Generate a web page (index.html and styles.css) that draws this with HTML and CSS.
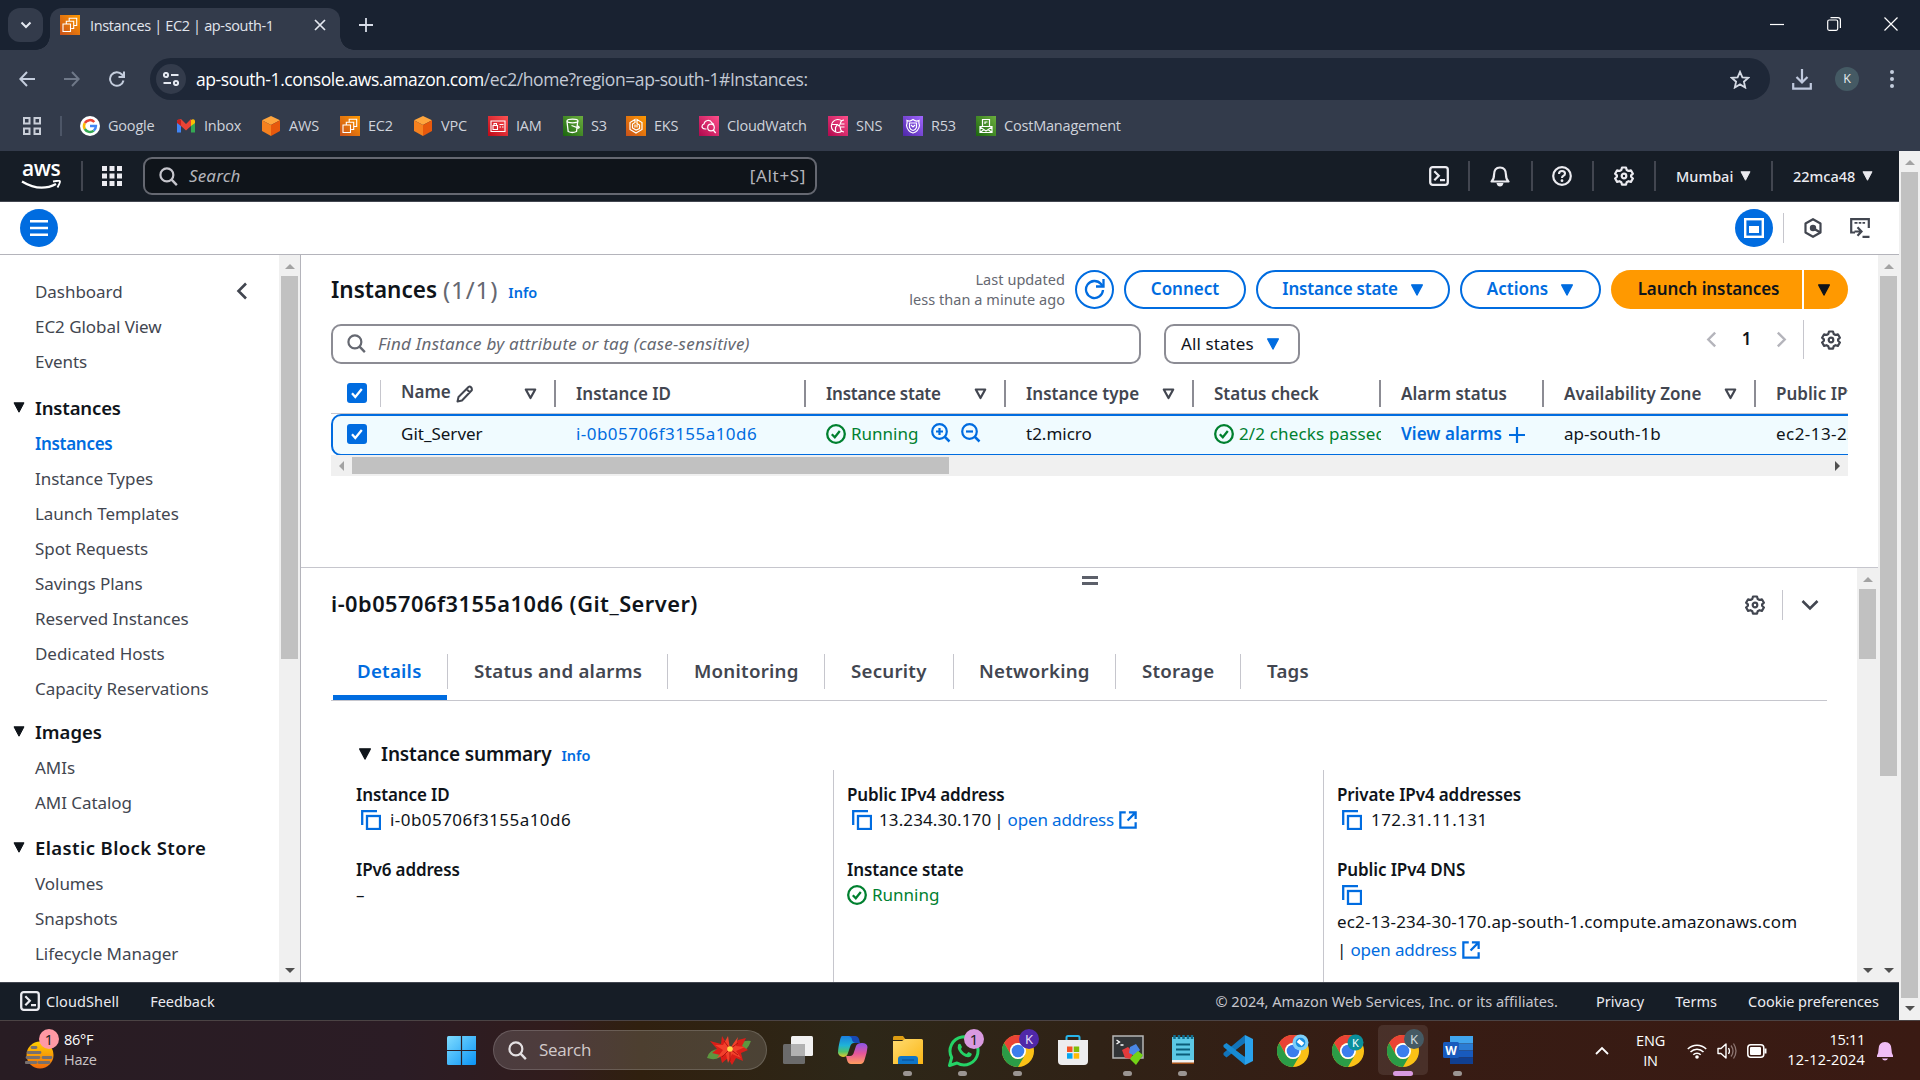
FILE: index.html
```html
<!DOCTYPE html>
<html lang="en">
<head>
<meta charset="utf-8">
<title>Instances | EC2 | ap-south-1</title>
<link rel="stylesheet" href="styles.css">
</head>
<body>
<svg class="defs" aria-hidden="true">
  <defs>
    <linearGradient id="g-orange" x1="0" y1="1" x2="1" y2="0"><stop offset="0" stop-color="#c8511b"/><stop offset="1" stop-color="#ff9900"/></linearGradient>
    <linearGradient id="g-red" x1="0" y1="1" x2="1" y2="0"><stop offset="0" stop-color="#bd0816"/><stop offset="1" stop-color="#ff5252"/></linearGradient>
    <linearGradient id="g-green" x1="0" y1="1" x2="1" y2="0"><stop offset="0" stop-color="#1b660f"/><stop offset="1" stop-color="#6cae3e"/></linearGradient>
    <linearGradient id="g-pink" x1="0" y1="1" x2="1" y2="0"><stop offset="0" stop-color="#b0084d"/><stop offset="1" stop-color="#ff4f8b"/></linearGradient>
    <linearGradient id="g-purple" x1="0" y1="1" x2="1" y2="0"><stop offset="0" stop-color="#4d27a8"/><stop offset="1" stop-color="#a166ff"/></linearGradient>
    <linearGradient id="g-win" x1="0" y1="0" x2="1" y2="1"><stop offset="0" stop-color="#7fdcff"/><stop offset="1" stop-color="#0a93f5"/></linearGradient>
    <linearGradient id="g-sun" x1="0" y1="0" x2="0" y2="1"><stop offset="0" stop-color="#ffd000"/><stop offset="1" stop-color="#f26a0b"/></linearGradient>
    <linearGradient id="g-folder" x1="0" y1="0" x2="1" y2="1"><stop offset="0" stop-color="#ffdb70"/><stop offset="1" stop-color="#fbb615"/></linearGradient>
    <linearGradient id="g-cop1" x1="0" y1="0" x2="0" y2="1"><stop offset="0" stop-color="#1a7fe0"/><stop offset=".45" stop-color="#1fb3d8"/><stop offset=".75" stop-color="#4fc26b"/><stop offset="1" stop-color="#e8c92b"/></linearGradient>
    <linearGradient id="g-cop2" x1="0" y1="0" x2="0" y2="1"><stop offset="0" stop-color="#8a55ea"/><stop offset=".5" stop-color="#e5569a"/><stop offset="1" stop-color="#ff9e5e"/></linearGradient>
    <symbol id="gear" viewBox="0 0 20 20"><path d="M8 1.500h4l.7 2.500 1.800 1 2.400-.7 2 3.400-1.800 1.700v1.400l1.800 1.700-2 3.400-2.400-.7-1.800 1-.7 2.400H8l-.7-2.400-1.800-1-2.400.7-2-3.400 1.800-1.700V9.400L1.100 7.700l2-3.400 2.400.7 1.800-1z" fill="none" stroke="currentColor" stroke-width="2.200" stroke-linejoin="round"/><circle cx="10" cy="10" r="2.300" fill="none" stroke="currentColor" stroke-width="2.200"/></symbol>
    <symbol id="tri" viewBox="0 0 12 11"><path d="M1 .8h10L6 10.200z" fill="currentColor" stroke="currentColor" stroke-linejoin="round"/></symbol>
    <symbol id="filter" viewBox="0 0 13 12"><path d="M1.800 1.500h9.400L6.500 10z" fill="none" stroke="currentColor" stroke-width="2.200" stroke-linejoin="round"/></symbol>
    <symbol id="search" viewBox="0 0 20 20"><circle cx="8.300" cy="8.300" r="6.800" fill="none" stroke="currentColor" stroke-width="2.300"/><path d="M13 13l5.800 6" fill="none" stroke="currentColor" stroke-width="2.500"/></symbol>
    <symbol id="shell" viewBox="0 0 20 20"><rect x="1.200" y="1.200" width="17.600" height="17.600" rx="2.500" fill="none" stroke="currentColor" stroke-width="2.300"/><path d="M5.300 5.300l4.500 4.500-4.500 4.500M11 14.200h5" fill="none" stroke="currentColor" stroke-width="2.200"/></symbol>
    <symbol id="ok" viewBox="0 0 20 20"><circle cx="10" cy="10" r="8.800" fill="none" stroke="#00802f" stroke-width="2.300"/><path d="M5.800 10.200l3 3 5-6.200" fill="none" stroke="#00802f" stroke-width="2.300"/></symbol>
    <symbol id="copy" viewBox="0 0 20 20"><path d="M1.200 15V1.200H16" fill="none" stroke="currentColor" stroke-width="2.300"/><rect x="6" y="6" width="13" height="13" fill="none" stroke="currentColor" stroke-width="2.300"/></symbol>
    <symbol id="ext" viewBox="0 0 20 20"><path d="M7.500 1.500h-6v17h17v-6M11 1.500h7.500V9M18.200 1.800L9.500 10.500" fill="none" stroke="currentColor" stroke-width="2.500"/></symbol>
    <symbol id="check" viewBox="0 0 20 20"><rect width="20" height="20" rx="3" fill="#006ce0"/><path d="M5 10.300l3.300 3.700 6.500-8" fill="none" stroke="#fff" stroke-width="2.300"/></symbol>
    <symbol id="chev" viewBox="0 0 12 18"><path d="M10 1.500L2.500 9l7.500 7.500" fill="none" stroke="currentColor" stroke-width="2.600"/></symbol>
    <symbol id="cube" viewBox="0 0 18 20"><path d="M9 0l9 4.300L9 9 0 4.300z" fill="#ffa53d"/><path d="M0 4.300L9 9v11l-9-5z" fill="#f6811f"/><path d="M18 4.300L9 9v11l9-5z" fill="#e8590c"/></symbol>
    <symbol id="ec2" viewBox="0 0 20 20"><rect width="20" height="20" fill="url(#g-orange)"/><path d="M3 9h7.500v7.500H3zM6.300 8.500V6.200h7.400v7.300h-2.500M9.200 6V3.300h7.500v7.200H14" fill="none" stroke="#fff" stroke-width="1.100"/></symbol>
    <symbol id="chrome" viewBox="0 0 32 32"><circle cx="16" cy="16" r="16" fill="#fbc116"/><path d="M2.140 8A16 16 0 0 1 29.860 8H16a8 8 0 0 0-6.930 12z" fill="#ea4335"/><path d="M2.140 8l6.930 12A8 8 0 0 0 22.930 20L16 32A16 16 0 0 1 2.140 8z" fill="#2b9c47"/><circle cx="16" cy="16" r="8" fill="#fff"/><circle cx="16" cy="16" r="6.300" fill="#3b7ded"/></symbol>
  </defs>
</svg>

<header class="browser">
  <div class="tabstrip">
    <button class="tabmenu"><svg width="12" height="8" viewBox="0 0 12 8"><path d="M1.500 1.500L6 6l4.500-4.500" fill="none" stroke="#e4e8f0" stroke-width="2"/></svg></button>
    <div class="tab">
      <svg width="20" height="20"><use href="#ec2"/></svg>
      <span class="tabtitle">Instances | EC2 | ap-south-1</span>
      <svg width="12" height="12" viewBox="0 0 12 12"><path d="M1 1l10 10M11 1L1 11" stroke="#e4e8f0" stroke-width="1.700"/></svg>
    </div>
    <svg class="plus" width="14" height="14" viewBox="0 0 14 14"><path d="M7 0v14M0 7h14" stroke="#d8dde8" stroke-width="1.800"/></svg>
    <div class="winbtns">
      <svg width="14" height="14" viewBox="0 0 14 14"><path d="M0 7.500h14" stroke="#fff" stroke-width="1.200"/></svg>
      <svg width="14" height="14" viewBox="0 0 14 14"><rect x=".7" y="3" width="10" height="10.300" rx="1.500" fill="none" stroke="#fff" stroke-width="1.200"/><path d="M3.500 .7h7.500q2.400 0 2.400 2.400v8" fill="none" stroke="#fff" stroke-width="1.200"/></svg>
      <svg width="14" height="14" viewBox="0 0 14 14"><path d="M.5 .5l13 13M13.500 .5l-13 13" stroke="#fff" stroke-width="1.200"/></svg>
    </div>
  </div>
  <div class="toolbar">
    <svg width="16" height="16" viewBox="0 0 16 16"><path d="M16 8H1.500M8 1L1.300 8 8 15" fill="none" stroke="#c4cddd" stroke-width="2"/></svg>
    <svg width="16" height="16" viewBox="0 0 16 16"><path d="M0 8h14.500M8 1l6.700 7L8 15" fill="none" stroke="#6f7888" stroke-width="2"/></svg>
    <svg width="16" height="16" viewBox="0 0 16 16"><path d="M14.500 9.500A6.800 6.800 0 1 1 13 3.500l1.500 1.800M15 .5v5.500H9.500" fill="none" stroke="#c4cddd" stroke-width="2"/></svg>
    <div class="omnibox">
      <span class="tune"><svg width="16" height="14" viewBox="0 0 16 14"><g fill="none" stroke="#e4e8f0" stroke-width="2"><circle cx="3" cy="3" r="2.100"/><path d="M8 3h7.500M.5 11H8"/><circle cx="13" cy="11" r="2.100"/></g></svg></span>
      <span class="url"><b>ap-south-1.console.aws.amazon.com</b>/ec2/home?region=ap-south-1#Instances:</span>
      <svg width="20" height="19" viewBox="0 0 20 19"><path d="M10 1.800l2.400 5.500 6 .5-4.500 3.900 1.300 5.800L10 14.400l-5.200 3.100 1.300-5.800L1.600 7.800l6-.5z" fill="none" stroke="#d5dae4" stroke-width="1.800"/></svg>
    </div>
    <svg class="dl" width="20" height="21" viewBox="0 0 20 21"><path d="M10 0v13M4.500 8l5.500 5.500L15.500 8M1.200 14v5.600h17.600V14" fill="none" stroke="#c0c9dd" stroke-width="2.200"/></svg>
    <span class="avatar">K</span>
    <svg class="dots" width="4" height="18" viewBox="0 0 4 18" fill="#c4cddd"><circle cx="2" cy="2" r="2"/><circle cx="2" cy="9" r="2"/><circle cx="2" cy="16" r="2"/></svg>
  </div>
  <nav class="bookmarks">
    <svg class="apps" width="18" height="18" viewBox="0 0 18 18"><g fill="none" stroke="#c9ced8" stroke-width="2"><path d="M1 1h5.500v5.500H1zM11.500 1H17v5.500h-5.500zM1 11.500h5.500V17H1zM11.500 11.500H17V17h-5.500z"/></g></svg>
    <div class="bmlist">
      <a><svg width="20" height="20" viewBox="0 0 20 20"><circle cx="10" cy="10" r="10" fill="#fff"/><g fill="none" stroke-width="2.500"><path d="M14.300 6A6 6 0 0 0 4.800 7" stroke="#ea4335"/><path d="M4.800 7a6 6 0 0 0 0 6" stroke="#fbbc05"/><path d="M4.800 13a6 6 0 0 0 9 1.600" stroke="#34a853"/><path d="M13.800 14.600A6 6 0 0 0 15.900 10H10" stroke="#4285f4"/></g></svg><span>Google</span></a>
      <a><svg width="20" height="20" viewBox="0 0 20 20"><path d="M1 4v12.500h4V9z" fill="#4285f4"/><path d="M19 4v12.500h-4V9z" fill="#34a853"/><path d="M1 4.500L5 3l5 5 5-5v7l-5 4.500L5 10z" fill="#ea4335"/><path d="M1 4.500Q2.500 2.500 5 4v6L1 7z" fill="#c5221f"/><path d="M19 4.500Q17.500 2.500 15 4v6l4-3z" fill="#fbbc04"/></svg><span>Inbox</span></a>
      <a><svg width="20" height="20"><use href="#cube"/></svg><span>AWS</span></a>
      <a><svg width="20" height="20"><use href="#ec2"/></svg><span>EC2</span></a>
      <a><svg width="20" height="20"><use href="#cube"/></svg><span>VPC</span></a>
      <a><svg width="20" height="20" viewBox="0 0 20 20"><rect width="20" height="20" fill="url(#g-red)"/><g fill="none" stroke="#fff" stroke-width="1.100"><path d="M3 5h14v10.500H3zM5 9.500h4.500v4H5zM6 9.300V7.500h2.500v1.800M11.500 8.500h4M11.500 11h1.500M14 11h1.500"/></g></svg><span>IAM</span></a>
      <a><svg width="20" height="20" viewBox="0 0 20 20"><rect width="20" height="20" fill="url(#g-green)"/><g fill="none" stroke="#fff" stroke-width="1.300"><ellipse cx="9.500" cy="5" rx="5.500" ry="1.800"/><path d="M4 5.500l1.200 10q4 2 8.300 0l1.200-10M8.500 9.500l7 2.500q2-.5-1.500-2.500"/></g></svg><span>S3</span></a>
      <a><svg width="20" height="20" viewBox="0 0 20 20"><rect width="20" height="20" fill="url(#g-orange)"/><g fill="none" stroke="#fff" stroke-width="1.200"><path d="M9 3.500L4 6.500v7l6 3.500 6-3.500v-7l-5-3v4l2.500 1.500v3.500L10 14l-3.500-2V8L9 6.500zM9 8.500v3M11 8.500v3"/></g></svg><span>EKS</span></a>
      <a><svg width="20" height="20" viewBox="0 0 20 20"><rect width="20" height="20" fill="url(#g-pink)"/><g fill="none" stroke="#fff" stroke-width="1.200"><path d="M7.500 13H6q-3-.5-3-2.500t2-2.500q.5-3 3.500-3.500T13 7l2 1.500"/><circle cx="12" cy="11.500" r="3.300"/><path d="M14.200 14l2.500 3"/></g></svg><span>CloudWatch</span></a>
      <a><svg width="20" height="20" viewBox="0 0 20 20"><rect width="20" height="20" fill="url(#g-pink)"/><g fill="none" stroke="#fff" stroke-width="1.200"><path d="M14 5A6.500 6.500 0 1 0 14 15M3.500 8.500h6l-2 3v4M16 4q-3 0-3.500 3T10 9.500q2.500 0 2.500 3T16 16M13 8h3.500M13 11h3.500"/></g></svg><span>SNS</span></a>
      <a><svg width="20" height="20" viewBox="0 0 20 20"><rect width="20" height="20" fill="url(#g-purple)"/><g fill="none" stroke="#fff" stroke-width="1.200"><path d="M4 4.500q3 1.500 6-1 3 2.500 6 1-.5 3 .5 5-1 6-6.500 7.500Q4.500 15.500 3.500 9.500q1-2 .5-5z"/><path d="M6.500 7h7v4.500q-1 2.500-3.500 3-2.500-.5-3.500-3zM8 9l2 2 2-2"/></g></svg><span>R53</span></a>
      <a><svg width="20" height="20" viewBox="0 0 20 20"><rect width="20" height="20" fill="url(#g-green)"/><g fill="none" stroke="#fff" stroke-width="1.200"><path d="M6.500 10V3.500h7V10M4 10.500h12v6H4zM4 11l6 4 6-4M4 16.500l4-3M16 16.500l-4-3M9 8V6h2.500"/></g></svg><span>CostManagement</span></a>
    </div>
  </nav>
</header>

<div class="viewport">
  <div class="page">
    <header class="awsnav">
      <div class="logo"><span>aws</span><svg width="40" height="12" viewBox="0 0 40 12"><path d="M1 1.500q18 11 34 2.500" fill="none" stroke="#fff" stroke-width="2.200"/><path d="M32 1.500q7-1.500 7 0t-2.500 6" fill="none" stroke="#fff" stroke-width="1.800"/></svg></div>
      <div class="services"><svg width="20" height="20" viewBox="0 0 20 20" fill="#ebebf0"><path d="M0 0h5v5H0zM7.500 0h5v5h-5zM15 0h5v5h-5zM0 7.500h5v5H0zM7.500 7.500h5v5h-5zM15 7.500h5v5h-5zM0 15h5v5H0zM7.500 15h5v5h-5zM15 15h5v5h-5z"/></svg></div>
      <div class="awssearch"><svg width="19" height="19"><use href="#search"/></svg><i>Search</i><span>[Alt+S]</span></div>
      <div class="awsright">
        <span><svg width="20" height="20"><use href="#shell"/></svg></span>
        <span><svg width="20" height="21" viewBox="0 0 20 21"><path d="M1.500 15.500q2.500-2 2.500-6.500 0-7.500 6-7.500T16 9q0 4.500 2.500 6.500z" fill="none" stroke="currentColor" stroke-width="2.200" stroke-linejoin="round"/><path d="M6.500 17h7q-.8 3.500-3.500 3.500T6.500 17z" fill="currentColor"/></svg></span>
        <span><svg width="20" height="20" viewBox="0 0 20 20"><circle cx="10" cy="10" r="8.800" fill="none" stroke="currentColor" stroke-width="2.200"/><path d="M7 8q0-3 3-3t3 2.600q0 1.600-1.500 2.200T10 12" fill="none" stroke="currentColor" stroke-width="2.100"/><circle cx="10" cy="14.700" r="1.400" fill="currentColor"/></svg></span>
        <span><svg width="20" height="20"><use href="#gear"/></svg></span>
        <span class="txt">Mumbai<svg width="11" height="10"><use href="#tri"/></svg></span>
        <span class="txt">22mca48<svg width="11" height="10"><use href="#tri"/></svg></span>
      </div>
    </header>

    <div class="crumbs">
      <span class="disc"><svg width="18" height="16" viewBox="0 0 18 16"><path d="M0 1.300h18M0 8h18M0 14.700h18" stroke="#fff" stroke-width="2.400"/></svg></span>
      <span class="disc push"><svg width="20" height="20" viewBox="0 0 20 20"><rect x="1.200" y="1.200" width="17.600" height="17.600" fill="none" stroke="#fff" stroke-width="2.400"/><rect x="5" y="8" width="10" height="7" fill="#fff"/></svg></span>
      <span class="vline"></span>
      <svg class="hex" width="20" height="20" viewBox="0 0 20 20"><path d="M10 1.200l7.500 4.300v9L10 18.800l-7.500-4.300v-9z" fill="none" stroke="#424650" stroke-width="2.200" stroke-linejoin="round"/><circle cx="10" cy="10" r="3.200" fill="#424650"/><path d="M10.500 10.500l6.500 3.700" stroke="#424650" stroke-width="2.400"/></svg>
      <svg width="20" height="20" viewBox="0 0 20 20"><path d="M5 14.500H1.200V1.200h17.600V10M12.500 18.800h7" fill="none" stroke="#424650" stroke-width="2.200"/><path d="M4.500 4.800h3M8.700 4.800h2.600M12.500 4.800h2.600" stroke="#424650" stroke-width="1.800"/><path d="M4.500 13.500h6.500M7.500 9.300l4 4.200-4 4.300" fill="none" stroke="#424650" stroke-width="2.200"/></svg>
    </div>

    <div class="body">
      <aside class="sidebar">
        <nav class="side">
          <div class="toprow"><a>Dashboard</a><svg width="12" height="18"><use href="#chev"/></svg></div>
          <a>EC2 Global View</a>
          <a>Events</a>
          <h4 class="h-inst"><svg width="12" height="11"><use href="#tri"/></svg>Instances</h4>
          <a class="on">Instances</a>
          <a>Instance Types</a>
          <a>Launch Templates</a>
          <a>Spot Requests</a>
          <a>Savings Plans</a>
          <a>Reserved Instances</a>
          <a>Dedicated Hosts</a>
          <a>Capacity Reservations</a>
          <h4 class="h-img"><svg width="12" height="11"><use href="#tri"/></svg>Images</h4>
          <a>AMIs</a>
          <a>AMI Catalog</a>
          <h4 class="h-ebs"><svg width="12" height="11"><use href="#tri"/></svg>Elastic Block Store</h4>
          <a>Volumes</a>
          <a>Snapshots</a>
          <a>Lifecycle Manager</a>
        </nav>
        <div class="sb"><i class="up"></i><b class="t-side"></b><i class="down"></i></div>
      </aside>

      <main class="main">
        <section class="list">
          <div class="head">
            <h1>Instances</h1><span class="count">(1/1)</span><a class="info">Info</a>
            <p class="updated">Last updated<br>less than a minute ago</p>
            <button class="btn round"><svg width="21" height="21" viewBox="0 0 21 21"><path d="M19 11A8.500 8.500 0 1 1 17 5l2 2.500" fill="none" stroke="currentColor" stroke-width="2.300"/><path d="M19.500 0v7.500H12" fill="none" stroke="currentColor" stroke-width="2.300"/></svg></button>
            <button class="btn w-connect">Connect</button>
            <button class="btn w-state">Instance state<svg width="14" height="12"><use href="#tri"/></svg></button>
            <button class="btn w-actions">Actions<svg width="14" height="12"><use href="#tri"/></svg></button>
            <button class="launch">Launch instances</button>
            <button class="launchmore"><svg width="14" height="12"><use href="#tri"/></svg></button>
          </div>
          <div class="filters">
            <div class="find"><svg width="19" height="19"><use href="#search"/></svg><i>Find Instance by attribute or tag (case-sensitive)</i></div>
            <div class="states">All states<svg width="14" height="12"><use href="#tri"/></svg></div>
            <div class="pager"><svg class="dim" width="11" height="17"><use href="#chev"/></svg><span>1</span><svg class="dim flip" width="11" height="17"><use href="#chev"/></svg></div>
            <div class="prefs"><svg width="20" height="20"><use href="#gear"/></svg></div>
          </div>
          <div class="table">
            <div class="tr th">
              <div><svg width="20" height="20"><use href="#check"/></svg></div>
              <div><span class="nm">Name</span><svg class="pen" width="18" height="18" viewBox="0 0 18 18"><path d="M1.500 16.500l1-4.500L12.500 2q1.300-1 2.500.3t.8 3L6 15.500zM10.500 4l3.500 3.500" fill="none" stroke="currentColor" stroke-width="2" stroke-linejoin="round"/></svg><svg class="fl" width="13" height="12"><use href="#filter"/></svg></div>
              <div>Instance ID</div>
              <div class="tight">Instance state<svg class="fl" width="13" height="12"><use href="#filter"/></svg></div>
              <div>Instance type<svg class="fl" width="13" height="12"><use href="#filter"/></svg></div>
              <div>Status check</div>
              <div>Alarm status</div>
              <div>Availability Zone<svg class="fl" width="13" height="12"><use href="#filter"/></svg></div>
              <div>Public IPv4 DNS</div>
            </div>
            <div class="tr td">
              <div><svg width="20" height="20"><use href="#check"/></svg></div>
              <div>Git_Server</div>
              <div><a class="digits">i-0b05706f3155a10d6</a></div>
              <div class="green"><svg width="20" height="20"><use href="#ok"/></svg>Running
                <svg class="zi" width="20" height="20" viewBox="0 0 20 20"><path d="M8.500 5v7M5 8.500h7" stroke="#006ce0" stroke-width="2.200"/><circle cx="8.500" cy="8.500" r="7.300" fill="none" stroke="#006ce0" stroke-width="2.200"/><path d="M13.500 13.500l5 5" stroke="#006ce0" stroke-width="2.500"/></svg>
                <svg class="zo" width="20" height="20" viewBox="0 0 20 20"><path d="M5 8.500h7" stroke="#006ce0" stroke-width="2.200"/><circle cx="8.500" cy="8.500" r="7.300" fill="none" stroke="#006ce0" stroke-width="2.200"/><path d="M13.500 13.500l5 5" stroke="#006ce0" stroke-width="2.500"/></svg></div>
              <div>t2.micro</div>
              <div class="green checks"><svg width="20" height="20"><use href="#ok"/></svg><span>2/2 checks passed</span></div>
              <div><a class="bold">View alarms</a><svg class="add" width="16" height="16" viewBox="0 0 16 16"><path d="M8 0v16M0 8h16" stroke="#006ce0" stroke-width="2.200"/></svg></div>
              <div>ap-south-1b</div>
              <div class="digits">ec2-13-234-30-170</div>
            </div>
          </div>
          <div class="hsb"><i class="left"></i><b></b><i class="right"></i></div>
        </section>

        <section class="split">
          <div class="detail">
            <div class="grip"></div>
            <div class="dtitle"><h2>i-0b05706f3155a10d6 (Git_Server)</h2><svg width="20" height="20"><use href="#gear"/></svg><span class="vline"></span><svg class="dchev" width="18" height="12" viewBox="0 0 18 12"><path d="M1.500 2L9 9.500 16.500 2" fill="none" stroke="#424650" stroke-width="2.600"/></svg></div>
            <div class="tabs"><span class="on t1">Details</span><span class="t2">Status and alarms</span><span class="t3">Monitoring</span><span class="t4">Security</span><span class="t5">Networking</span><span class="t6">Storage</span><span class="t7">Tags</span></div>
            <div class="sumhead"><svg width="14" height="12"><use href="#tri"/></svg><h3>Instance summary</h3><a class="info">Info</a></div>
            <div class="cols">
              <dl><dt>Instance ID</dt><dd><svg class="cp" width="20" height="20"><use href="#copy"/></svg><span class="digits">i-0b05706f3155a10d6</span></dd><dt>IPv6 address</dt><dd>–</dd></dl>
              <dl><dt>Public IPv4 address</dt><dd><svg class="cp" width="20" height="20"><use href="#copy"/></svg><span class="ip">13.234.30.170</span><span class="bar">|</span><a>open address</a><svg class="ex" width="18" height="18"><use href="#ext"/></svg></dd><dt>Instance state</dt><dd class="green"><svg width="20" height="20"><use href="#ok"/></svg>Running</dd></dl>
              <dl><dt>Private IPv4 addresses</dt><dd><svg class="cp" width="20" height="20"><use href="#copy"/></svg><span class="digits">172.31.11.131</span></dd><dt>Public IPv4 DNS</dt><dd><svg class="cp" width="20" height="20"><use href="#copy"/></svg></dd><dd class="dns">ec2-13-234-30-170.ap-south-1.compute.amazonaws.com</dd><dd class="open"><span class="bar">|</span><a>open address</a><svg class="ex" width="18" height="18"><use href="#ext"/></svg></dd></dl>
            </div>
          </div>
          <div class="sb"><i class="up"></i><b class="t-split"></b><i class="down"></i></div>
        </section>
      </main>
      <div class="sb"><i class="up"></i><b class="t-main"></b><i class="down"></i></div>
    </div>

    <footer class="foot">
      <svg width="20" height="20"><use href="#shell"/></svg><span class="cs">CloudShell</span><span>Feedback</span>
      <span class="copyr">© 2024, Amazon Web Services, Inc. or its affiliates.</span><span class="pv">Privacy</span><span class="tm">Terms</span><span class="ck">Cookie preferences</span>
    </footer>
  </div>
  <div class="sb pagesb"><i class="up"></i><b class="t-page"></b><i class="down"></i></div>
</div>

<footer class="taskbar">
  <div class="weather">
    <svg width="36" height="44" viewBox="0 0 36 44"><circle cx="15" cy="26" r="13.500" fill="url(#g-sun)"/><path d="M7 18.500h4M3 23.500h12M18 28.500h8M2 28.500h12M1 33.500h10M14 33.500h10" stroke="#77706f" stroke-width="2.800" stroke-linecap="round"/><circle cx="24" cy="10" r="10" fill="#ff99a4"/><text x="24" y="15.500" text-anchor="middle" font-size="14.500" fill="#222">1</text></svg>
    <p>86°F<br><em>Haze</em></p>
  </div>
  <div class="apps-row">
    <span class="win"><svg width="29" height="29" viewBox="0 0 29 29" fill="url(#g-win)"><path d="M1.500 0H29v27.500q0 1.500-1.500 1.500h-26Q0 29 0 27.500v-26Q0 0 1.500 0z"/><path d="M14.500 0v29M0 14.500h29" stroke="#2b1e26" stroke-width="1.200"/></svg></span>
    <div class="tsearch"><svg width="19" height="19"><use href="#search"/></svg><span>Search</span>
      <svg width="44" height="30" viewBox="0 0 44 30"><path d="M0 23q2-9 13-9l6 3q-8 10-19 6zM44 6q-8-1-14 4l-2 6q11 4 16-10z" fill="#5d9640"/><path d="M23 14L15 1l-1 8-11-3 7 8-5 4 8 2 2 8 6-5 4 7 4-7 7 3-2-8 7-3-6-4 4-8-8 2z" fill="#d91e18"/><path d="M23 14L21 1l-5 9-8 0 8 5-6 8 9-4 2 9 4-9 9 4-5-7 9-4-9-1 2-9-5 7z" fill="#f2402b"/><path d="M23 14L17 6M23 14l8-6M23 14l-8 8M23 14l8 6M23 14v12" stroke="#a8120f" stroke-width=".9"/><circle cx="23" cy="14" r="2.800" fill="#ffd94a"/></svg></div>
    <span><svg width="32" height="32" viewBox="0 0 32 32"><rect x="1" y="10" width="22" height="20" rx="1.500" fill="#6b6b6b"/><rect x="9" y="2" width="22" height="20" rx="1.500" fill="#f1f1f1"/><path d="M9 10h14v12H9z" fill="#b2b2b2"/></svg></span>
    <span><svg width="32" height="32" viewBox="0 0 32 32"><path d="M5 2h11q3 0 4 3l1 4h-4q-3 0-4 4l-2 6q-1 4-5 4-4-.5-5-4 0-5 2-13 1-4 2-4z" fill="url(#g-cop1)"/><path d="M12 2h6q3 0 4 3l1 4h-4q-3 0-4-3 0-3-3-4z" fill="#1749b5"/><path d="M25 9q5 0 5.500 4-.5 6-3 13-1 4-4 4H14q-3 0-4-4l-1-4h4q3 0 4-4l2-6q1-3 6-3z" fill="url(#g-cop2)"/></svg></span>
    <span class="dot"><svg width="32" height="32" viewBox="0 0 32 32"><path d="M1 3.500Q1 2 2.500 2H11l3 4H1z" fill="#dd9d12"/><path d="M1 7h9l3-2h16.500Q31 5 31 6.500V30H1z" fill="url(#g-folder)"/><path d="M6 30v-5q0-3 3-3h14q3 0 3 3v5z" fill="#0f75c8"/><path d="M10 26h12" stroke="#0a4a90"/></svg></span>
    <span class="dot"><svg class="badged" width="38" height="40" viewBox="0 0 38 40"><path d="M3.500 36.500l2.200-8A14 14 0 1 1 11 34z" fill="none" stroke="#25d366" stroke-width="3" stroke-linejoin="round"/><path d="M12 16q1-2 2.500-1l1.500 3-1 2q2 4 5.500 5l2-2 3 1.500q1 1-1 3-3 2-8-1.500-6-5-4.500-10z" fill="#25d366"/><circle cx="28" cy="10" r="10" fill="#d99ae0"/><text x="28" y="15.500" text-anchor="middle" font-size="15" fill="#222">1</text></svg></span>
    <span class="dot"><svg class="badged" width="38" height="40" viewBox="0 0 38 40"><svg x="1" y="6" width="32" height="32"><use href="#chrome"/></svg><circle cx="28" cy="10" r="10" fill="#5028a8"/><text x="28" y="15" text-anchor="middle" font-size="13" fill="#e3d8f8">K</text></svg></span>
    <span><svg width="32" height="32" viewBox="0 0 32 32"><path d="M9.500 8V3.500Q9.500 2 11 2h10q1.500 0 1.500 1.500V8" fill="none" stroke="#28b5ea" stroke-width="2"/><path d="M1 6h30v21q0 4-4 4H5q-4 0-4-4z" fill="#ededee"/><path d="M10 12.500h5.500V18H10z" fill="#f35325"/><path d="M16.700 12.500h5.500V18h-5.500z" fill="#81bc06"/><path d="M10 19.200h5.500v5.500H10z" fill="#05a6f0"/><path d="M16.700 19.200h5.500v5.500h-5.500z" fill="#ffba08"/></svg></span>
    <span class="dot"><svg width="32" height="32" viewBox="0 0 32 32"><rect x="1" y="2" width="30" height="22" fill="#333537" stroke="#b7b7b7" stroke-width="1.500"/><path d="M4.500 6l3 2-3 2M8.500 11h3" stroke="#fff" stroke-width="1.300" fill="none"/><path d="M10 16l6-3 5 5-2 7-6-1z" fill="#e33b3b"/><path d="M18 13l6-3 4 6-5 6-6-3z" fill="#4a87e6"/><path d="M20 22l6-5 5 4-7 10-6-6z" fill="#73d216"/></svg></span>
    <span class="dot"><svg width="32" height="32" viewBox="0 0 32 32"><path d="M5 3h22v24H5z" fill="#5cc8e4"/><path d="M5 27h22v3H5z" fill="#a34f15"/><path d="M5 26h22v2.500H5z" fill="#f2f2f2"/><path d="M7.500 1v4M12 1v4M16.500 1v4M21 1v4M25 1v4" stroke="#116f91" stroke-width="2.500"/><path d="M9 10.500h14M9 15.500h14M9 20.500h14" stroke="#0b5c78" stroke-width="1.800"/></svg></span>
    <span><svg width="32" height="32" viewBox="0 0 32 32"><path d="M23 1l8 4v22l-8 4-1-6V9z" fill="#2aa2ec"/><path d="M23 1v8L4.500 23.500 1.500 21v-2z" fill="#1274ba"/><path d="M23 31v-8L4.500 9 1.500 11v2z" fill="#178bd4"/><path d="M23 9v14l-9-7z" fill="#33241a"/></svg></span>
    <span><svg width="34" height="36" viewBox="0 0 34 36"><svg x="1" y="3" width="32" height="32"><use href="#chrome"/></svg><circle cx="24.500" cy="10.500" r="8" fill="#7fd0f8"/><circle cx="24.500" cy="10.500" r="4.800" fill="#1a8fe0"/><path d="M22 8.500l5 4" stroke="#fff" stroke-width="4"/></svg></span>
    <span><svg width="34" height="36" viewBox="0 0 34 36"><svg x="1" y="3" width="32" height="32"><use href="#chrome"/></svg><circle cx="24.500" cy="10.500" r="8" fill="#0a8f9c"/><text x="24.500" y="14.500" text-anchor="middle" font-size="11" fill="#fff">K</text></svg></span>
    <span class="active"><svg class="badged" width="38" height="40" viewBox="0 0 38 40"><svg x="1" y="6" width="32" height="32"><use href="#chrome"/></svg><circle cx="28" cy="10" r="10" fill="#455a64"/><text x="28" y="15" text-anchor="middle" font-size="13" fill="#cfd8dc">K</text></svg></span>
    <span class="dot"><svg width="32" height="32" viewBox="0 0 32 32"><path d="M8 2h23v7.500H8z" fill="#41a5ee"/><path d="M8 9.500h23v7H8z" fill="#2b7cd3"/><path d="M8 16.500h23v7H8z" fill="#185abd"/><path d="M8 23.500h23V30H8z" fill="#103f91"/><rect x="1" y="8" width="16" height="16" rx="1.500" fill="#185abd"/><text x="9" y="20.500" text-anchor="middle" font-size="12" font-weight="700" fill="#fff">W</text></svg></span>
  </div>
  <div class="tray">
    <svg class="trayup" width="14" height="9" viewBox="0 0 14 9"><path d="M1 8l6-6 6 6" fill="none" stroke="#fff" stroke-width="1.800"/></svg>
    <p class="lang">ENG<br>IN</p>
    <svg width="20" height="16" viewBox="0 0 20 16"><g fill="none" stroke="#fff" stroke-width="1.500"><path d="M.8 6a13 13 0 0 1 18.400 0M3.500 9a9 9 0 0 1 13 0M6.300 11.800a5 5 0 0 1 7.400 0"/></g><circle cx="10" cy="14" r="1.800" fill="#fff"/></svg>
    <svg class="vol" width="20" height="18" viewBox="0 0 20 18"><path d="M1 6.500h3L9 2v14l-5-4.500H1z" fill="none" stroke="#fff" stroke-width="1.400" stroke-linejoin="round"/><path d="M11.500 6q2 3 0 6" fill="none" stroke="#fff" stroke-width="1.300"/><path d="M14 3.500q4 5.500 0 11M16.500 1.500q5 7.500 0 15" fill="none" stroke="#8d7672" stroke-width="1.300"/></svg>
    <svg class="bat" width="20" height="14" viewBox="0 0 20 14"><rect x=".8" y=".8" width="16" height="12.400" rx="3" fill="none" stroke="#fff" stroke-width="1.500"/><rect x="3" y="3" width="11" height="8" rx="1" fill="#fff"/><path d="M18.500 4.500v5" stroke="#fff" stroke-width="2"/></svg>
    <p class="clock">15:11<br><span>12-12-2024</span></p>
    <svg class="tbell" width="18" height="20" viewBox="0 0 18 20" fill="#f0bdf5"><path d="M1 14.500q1.500-2 1.500-6Q2.500 1 9 1t6.500 7.500q0 4 1.500 6v1.500H1zM6 17.500h6q-.8 2-3 2t-3-2z"/></svg>
  </div>
</footer>
</body>
</html>
```
FILE: styles.css
```css
* { box-sizing: border-box; }
body { margin: 0; width: 1920px; height: 1080px; overflow: hidden; display: flex; flex-direction: column; background: #fff; color: #0f141a; font: 17px/20px "Noto Sans", sans-serif; }
.defs { position: absolute; width: 0; height: 0; }
svg { display: block; flex: none; }
p, h1, h2, h3, h4, dl, dd { margin: 0; }
button { border: 0; background: none; padding: 0; font: inherit; color: inherit; display: flex; align-items: center; justify-content: center; flex: none; }
a { color: #006ce0; white-space: nowrap; }
text { font-family: "Noto Sans", sans-serif; }
.digits { letter-spacing: .45px; }

/* browser chrome */
.browser { flex: none; height: 151px; background: #333b4b; font-family: "Open Sans", "Noto Sans", sans-serif; }
.tabstrip { height: 50px; background: #192231; display: flex; align-items: flex-start; padding: 8px 22px 0 8px; }
.tabmenu { width: 35px; height: 34px; border-radius: 12px; background: #333b4b; margin-right: 7px; }
.tab { position: relative; width: 290px; height: 42px; border-radius: 12px 12px 0 0; background: #333b4b; display: flex; align-items: center; padding: 0 14px 8px 10px; color: #e1e5ed; }
.tab::before, .tab::after { content: ""; position: absolute; bottom: 0; width: 14px; height: 14px; }
.tab::before { left: -14px; background: radial-gradient(circle at 0 0, transparent 13.500px, #333b4b 14px); }
.tab::after { right: -14px; background: radial-gradient(circle at 100% 0, transparent 13.500px, #333b4b 14px); }
.tabtitle { flex: 1; margin: 1px 0 0 10px; font-size: 14.500px; letter-spacing: -.35px; white-space: nowrap; }
.plus { margin: 10px 0 0 19px; }
.winbtns { margin: 9px 0 0 auto; display: flex; gap: 43px; }
.toolbar { height: 58px; display: flex; align-items: center; padding-left: 19px; gap: 29px; border-radius: 12px 12px 0 0; }
.omnibox { width: 1620px; height: 42px; border-radius: 21px; background: #1e2737; display: flex; align-items: center; padding: 0 20px 0 6px; margin-left: -4px; }
.tune { width: 30px; height: 30px; border-radius: 50%; background: #333b4b; display: flex; align-items: center; justify-content: center; }
.url { flex: 1; margin-left: 10px; font-size: 17.500px; letter-spacing: -.41px; color: #c3c9d4; }
.url b { font-weight: 400; color: #fff; }
.dl { margin-left: -7px; }
.avatar { width: 24px; height: 24px; margin-left: -6px; border-radius: 50%; background: #455a64; color: #e6ecee; font-size: 12.500px; line-height: 24px; text-align: center; }
.dots { margin-left: 2px; }
.bookmarks { height: 36px; display: flex; align-items: center; padding-left: 23px; }
.bmlist { border-left: 2px solid #4d5667; margin-left: 19px; padding-left: 18px; height: 20px; display: grid; grid-template-columns: 96px 85px 79px 73px 75px 75px 63px 73px 129px 75px 73px 160px; }
.bmlist a { display: flex; align-items: center; gap: 8px; color: #cfd3db; font-size: 14.500px; letter-spacing: -.2px; }

/* console */
.viewport { flex: none; height: 869px; display: flex; }
.page { width: 1899px; display: flex; flex-direction: column; }
.awsnav { height: 51px; background: #161d26; border-bottom: 1px solid #424650; display: flex; align-items: center; padding-left: 21px; color: #ebebf0; }
.logo { width: 62px; height: 30px; border-right: 2px solid #424650; display: flex; flex-direction: column; }
.logo span { color: #fff; font: 600 21px/15px "Open Sans", sans-serif; letter-spacing: -.4px; padding-left: 1px; margin-bottom: 4px; }
.services { margin: 0 21px 0 19px; }
.awssearch { width: 674px; height: 38px; border: 2px solid #656871; border-radius: 9px; background: #0f141a; display: flex; align-items: center; padding: 0 9px 0 14px; color: #b4b4bb; }
.awssearch i { flex: 1; margin-left: 11px; letter-spacing: .15px; }
.awssearch span { letter-spacing: .65px; }
.awssearch svg { color: #c6c6cd; }
.awsright { margin-left: auto; display: grid; grid-template-columns: 60px 63px 61px 62px 117px 127px; }
.awsright span { height: 30px; display: flex; align-items: center; justify-content: center; padding-right: 2px; margin-left: -1px; }
.awsright span:first-child { padding: 0; margin: 0; }
.awsright span + span { border-left: 2px solid #424650; }
.awsright .txt { gap: 7px; font-size: 14.500px; font-weight: 500; white-space: nowrap; justify-content: flex-start; padding-left: 20px; }
.crumbs { height: 53px; border-bottom: 1px solid #b4b4bb; display: flex; align-items: center; padding: 0 29px 0 20px; }
.disc { width: 38px; height: 38px; border-radius: 50%; background: #006ce0; display: flex; align-items: center; justify-content: center; }
.push { margin-left: auto; }
.vline { width: 1px; height: 30px; background: #c6c6cd; flex: none; }
.crumbs .vline { margin: 0 19px 0 10px; }
.hex { margin-right: 27px; }
.body { height: 727px; display: flex; }
.sidebar { width: 301px; border-right: 1px solid #b4b4bb; display: flex; }
.side { flex: 1; padding: 18.500px 0 0 35px; overflow: hidden; color: #424650; }
.side a { display: block; height: 35px; line-height: 35px; color: inherit; letter-spacing: -.05px; }
.side .on { color: #006ce0; font-weight: 600; letter-spacing: -.3px; }
.toprow { display: flex; align-items: center; justify-content: space-between; padding-right: 31px; }
.side h4 { display: flex; align-items: center; gap: 10px; margin-left: -22px; font-size: 18.500px; font-weight: 600; color: #0f141a; }
.h-inst { height: 47px; padding-top: 11px; letter-spacing: -.15px; }
.h-img { height: 44.500px; padding-top: 8px; }
.h-ebs { height: 45.700px; padding-top: 10px; letter-spacing: .4px; }

/* scrollbars */
.sb { width: 21px; flex: none; background: #f0f0f0; display: flex; flex-direction: column; align-items: center; }
.sb i { width: 0; height: 0; border: 5px solid transparent; flex: none; }
.sb .up { border-top: 0; border-bottom-color: #a3a3a3; margin: 9px 0 7px; }
.sb .down { border-bottom: 0; border-top-color: #505050; margin: auto 0 9px; }
.sb b { width: 17px; background: #c1c1c1; }
.t-side { height: 383px; }
.t-main { height: 500px; }
.t-split { height: 70px; }
.t-page { height: 826px; }

/* instance list */
.main { width: 1577px; display: flex; flex-direction: column; }
.list { height: 312px; padding: 15px 30px 0; }
.head { height: 39px; display: flex; align-items: center; }
.head h1 { font-size: 22.500px; font-weight: 600; }
.count { font-size: 24px; letter-spacing: .9px; color: #656871; margin-left: 6px; }
.info { font-size: 14.500px; font-weight: 600; margin: 5px 0 0 10px; }
.updated { margin: -2px 10px 0 auto; text-align: right; font-size: 14.500px; letter-spacing: .05px; color: #656871; }
.btn { height: 39px; border: 2px solid #006ce0; border-radius: 20px; color: #006ce0; font-weight: 600; gap: 12px; margin-right: 10px; padding-bottom: 1px; }
.round { width: 39px; }
.w-connect { width: 122px; }
.w-state { width: 194px; letter-spacing: -.2px; }
.w-actions { width: 141px; }
.launch, .launchmore { height: 39px; background: #ff9900; font-weight: 600; padding-bottom: 1px; }
.launch { width: 191px; border-radius: 20px 0 0 20px; padding-left: 4px; margin-right: 2px; letter-spacing: -.1px; }
.launchmore { width: 44px; border-radius: 0 20px 20px 0; padding-right: 4px; }
.filters { margin-top: 15px; height: 40px; display: flex; }
.find, .states { height: 40px; border: 2px solid #8c8c94; border-radius: 10px; display: flex; align-items: center; padding-bottom: 1px; }
.find { width: 810px; padding-left: 14px; color: #656871; }
.find i { margin-left: 12px; letter-spacing: .24px; }
.states { width: 136px; margin-left: 23px; padding-left: 15px; gap: 12px; letter-spacing: .1px; }
.states svg, .launchmore svg, .btn svg { margin-top: 1px; }
.states svg { color: #006ce0; }
.pager { margin: 6px 16px 0 auto; height: 18px; display: flex; align-items: center; font-weight: 600; }
.pager span { width: 59px; text-align: center; }
.dim { color: #b4b4bb; }
.flip { transform: scaleX(-1); }
.prefs { width: 45px; height: 39px; margin-top: -4px; border-left: 1px solid #c6c6cd; display: flex; align-items: center; padding-left: 17px; color: #424650; }
.table { overflow: hidden; }
.tr { width: 1760px; display: grid; grid-template-columns: 50px 175px 250px 200px 188px 187px 163px 212px 335px; align-items: center; }
.tr > div { display: flex; align-items: center; padding-left: 20px; white-space: nowrap; }
.tr > div:first-child { padding-left: 16px; }
.th { height: 50px; border-bottom: 1px solid #c6c6cd; padding-top: 10px; font-weight: 600; color: #424650; letter-spacing: .02px; }
.th .tight { letter-spacing: -.25px; }
.th > div { height: 27px; border-right: 2px solid #8c8c94; }
.th > div:first-child { border-right: 1px solid #c6c6cd; }
.th > div:first-child svg { margin-top: -2px; }
.nm { margin-bottom: 3px; }
.pen { margin: 0 0 0 5px; }
.fl { margin: 0 17px 0 auto; }
.td { height: 42px; border: 2px solid #006ce0; border-radius: 10px; background: #f0fbff; }
.td > div { position: relative; left: -2px; margin-top: -3px; }
.td > .green { margin-top: -2px; }
.td > .checks { overflow: hidden; letter-spacing: .15px; }
.green { color: #00802f; }
.green svg { margin-right: 5px; }
.td .green svg.zi { margin: -3px 10px 0 13px; }
.td .green svg.zo { margin: -3px 0 0; }
.bold { font-weight: 600; letter-spacing: .05px; }
.add { margin: 3px 0 0 7px; }
.hsb { height: 21px; background: #f0f0f0; display: flex; align-items: center; margin-top: -1px; }
.hsb i { width: 0; height: 0; border: 5px solid transparent; }
.hsb .left { border-left: 0; border-right-color: #a3a3a3; margin: 0 8px; }
.hsb b { width: 597px; height: 17px; background: #c1c1c1; }
.hsb .right { border-right: 0; border-left-color: #505050; margin: 0 8px 0 auto; }

/* split panel */
.split { height: 415px; border-top: 1px solid #c6c6cd; display: flex; }
.detail { width: 1556px; padding: 0 30px; overflow: hidden; }
.grip { width: 16px; height: 9px; margin: 8px auto 0; position: relative; left: 11px; border: solid #5c606a; border-width: 3px 0; }
.dtitle { height: 30px; margin-top: 5px; display: flex; align-items: center; color: #424650; }
.dtitle h2 { flex: 1; font-size: 21.800px; line-height: 28px; font-weight: 600; letter-spacing: .48px; color: #0f141a; padding-bottom: 2px; }
.dtitle .vline { margin: 0 18px 0 17px; }
.dchev { margin-right: 8px; }
.tabs { height: 81px; border-bottom: 1px solid #c6c6cd; display: flex; align-items: flex-start; padding-top: 34px; color: #424650; font-size: 18.700px; font-weight: 600; letter-spacing: .24px; }
.tabs span { height: 35px; line-height: 33px; border-right: 1px solid #c6c6cd; padding-left: 26px; white-space: nowrap; }
.tabs .on { height: 46px; border: 0; padding-left: 24px; margin-left: 2px; color: #006ce0; background: linear-gradient(#c6c6cd, #c6c6cd) right top / 1px 35px no-repeat, linear-gradient(#006ce0, #006ce0) 0 100% / 114px 5px no-repeat; }
.t1 { width: 115px; } .t2 { width: 220px; } .t3 { width: 157px; } .t4 { width: 129px; } .t5 { width: 162px; } .t6 { width: 125px; }
.tabs .t5 { padding-left: 25px; }
.tabs .t7 { border: 0; }
.sumhead { margin-top: 40px; height: 26px; display: flex; align-items: center; padding-left: 27px; }
.sumhead h3 { font-size: 19px; font-weight: 600; margin-left: 9px; letter-spacing: -.15px; }
.sumhead .info { margin-top: 2px; }
.cols { margin-top: 3px; display: grid; grid-template-columns: 502px 490px 504px; }
.cols dl { height: 230px; padding: 15px 0 0 13px; border-left: 1px solid #c6c6cd; }
.cols dl:first-child { border: 0; padding-left: 25px; }
.cols dt { height: 20px; font-weight: 600; letter-spacing: -.12px; }
.cols dd { height: 30px; margin-bottom: 25px; display: flex; align-items: center; white-space: nowrap; }
.cols dd a { letter-spacing: -.15px; }
.cp { margin: 0 9px 0 5px; color: #006ce0; }
.cols .ip { letter-spacing: .1px; margin-left: -2px; }
.bar { margin: 0 4px 0 3px; }
.open .bar { margin-left: 0; }
.ex { margin-left: 5px; color: #006ce0; }
.cols dd.dns { margin: -28px 0 0; letter-spacing: .18px; }
.cols dd.open { margin: -2px 0 0; }

.foot { height: 38px; background: #161d26; border-top: 1px solid #424650; display: flex; align-items: center; padding: 0 20px 1px; color: #ebebf0; font-size: 14.500px; }
.foot span { white-space: nowrap; }
.foot .cs { margin: 0 31px 0 6px; letter-spacing: .1px; }
.copyr { margin-left: auto; color: #c6c6cd; letter-spacing: .02px; }
.pv { margin-left: 38px; }
.tm, .ck { margin-left: 31px; }

/* taskbar */
.taskbar { height: 60px; flex: none; border-top: 1px solid #4b4344; background: linear-gradient(90deg, #281c23 0, #2b1c25 400px, #311c1c 560px, #30200f 640px, #2d2718 860px, #302216 1100px, #371c14 1400px, #3a1a13 1920px); display: flex; align-items: center; color: #fff; font: 14.500px/20px "Open Sans", "Noto Sans", sans-serif; }
.weather { width: 434px; display: flex; padding-left: 25px; }
.weather p { margin: 1px 0 0 3px; line-height: 20px; letter-spacing: -.3px; }
.weather em { font-style: normal; color: #c9c3c5; }
.apps-row { width: 1052px; display: flex; align-items: center; }
.apps-row > span { width: 55px; height: 59px; display: flex; align-items: center; justify-content: center; position: relative; padding-bottom: 1px; }
.apps-row .badged { margin-left: 4px; margin-bottom: 2px; }
.tsearch { width: 274px; height: 40px; margin: -1px 3px 0 4px; border-radius: 20px; border: 1px solid rgba(255, 255, 255, .16); background: rgba(255, 255, 255, .14); display: flex; align-items: center; padding: 0 15px 0 14px; color: #e4e0e2; font-size: 17px; }
.tsearch span { flex: 1; margin-left: 12px; color: #d2cacb; letter-spacing: -.3px; }
.dot::after, .active::after { content: ""; position: absolute; bottom: 4px; left: 23px; width: 9px; height: 5px; border-radius: 3px; background: #9b9592; }
.active::before { content: ""; position: absolute; inset: 4px 2px 5px 3px; border-radius: 5px; background: rgba(255, 255, 255, .09); }
.active svg { position: relative; }
.active::after { left: 18px; width: 20px; background: #d99ae0; }
.tray { margin-left: auto; display: flex; align-items: center; padding-right: 26px; }
.trayup { margin-right: 27px; }
.lang { text-align: center; margin: 1px 22px 0 0; letter-spacing: -.2px; }
.vol { margin: 0 10px; }
.clock { width: 84px; margin: -1px 0 0 14px; text-align: right; letter-spacing: -.3px; white-space: nowrap; }
.clock span { letter-spacing: .2px; }
.tbell { margin-left: 11px; }
```
